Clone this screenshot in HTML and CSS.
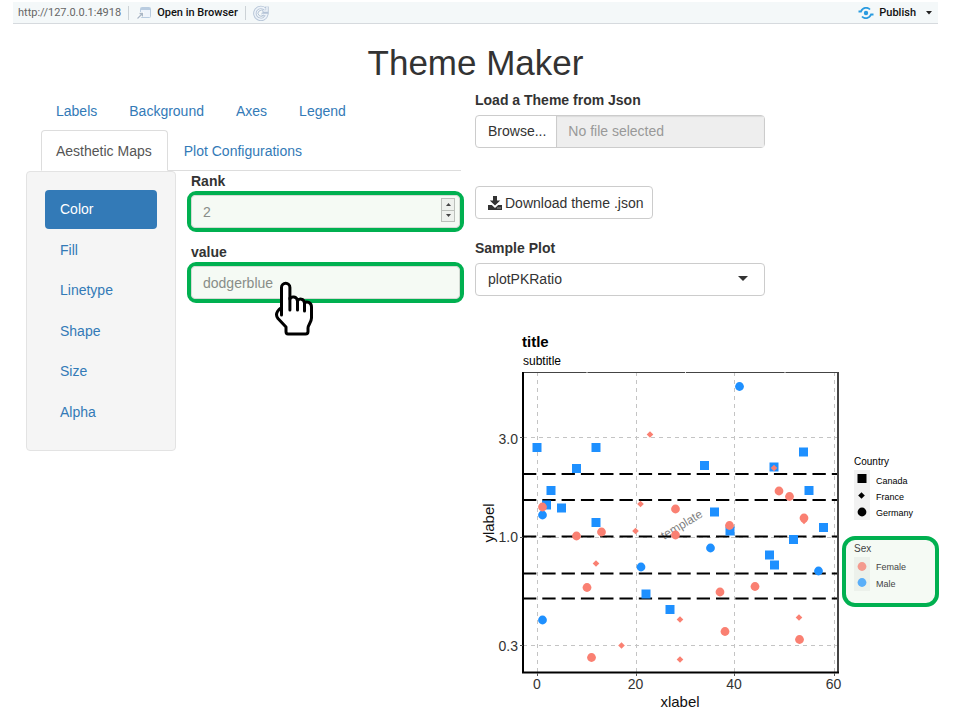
FILE: index.html
```html
<!DOCTYPE html>
<html lang="en">
<head>
<meta charset="utf-8">
<title>Theme Maker</title>
<link rel="stylesheet" href="styles.css">
</head>
<body>
<header class="toolbar">
  <span class="url">http://127.0.0.1:4918</span>
  <span class="divider"></span>
  <button class="tool" type="button">
    <svg width="16" height="14" viewBox="0 0 16 14" fill="none" aria-hidden="true"><rect x="4.500" y="1.500" width="10" height="10" rx="1" fill="#eef4fb" stroke="#b9cce0"/><path d="M5 3h9" stroke="#b9cce0" stroke-width="2"/><path d="M1.500 12.500 6 8M3.500 7.500H6.500V10.500" stroke="#fff" stroke-width="3"/><path d="M1.500 12.500 6 8M3.500 7.500H6.500V10.500" stroke="#a9b7c6" stroke-width="1.300"/></svg>
    Open in Browser
  </button>
  <span class="divider"></span>
  <button class="tool" type="button" aria-label="Refresh">
    <svg width="16" height="16" viewBox="0 0 16 16" fill="none" aria-hidden="true"><path d="M12.500 4.500A6 6 0 1 0 13.800 9.500H8.500M14 1.500V6H9.500" stroke="#b4c3d6" stroke-width="3.400"/><path d="M12.500 4.500A6 6 0 1 0 13.800 9.500H8.500M14 1.500V6H9.500" stroke="#edf3f9" stroke-width="1.600"/><path d="M10.500 6.500a3 3 0 1 0 0 3.500" stroke="#b4c3d6"/></svg>
  </button>
  <button class="tool publish" type="button">
    <svg width="16" height="12" viewBox="0 0 16 12" fill="none" aria-hidden="true"><circle cx="8" cy="6" r="2.200" fill="#2a9be0"/><path d="M.500 4.500H3C4.500.500 9.500-.300 12 2.500M15.500 7.500H13C11.500 11.500 6.500 12.300 4 9.500" stroke="#2a9be0" stroke-width="1.800"/></svg>
    Publish
    <svg class="more" width="6" height="4" viewBox="0 0 6 4" aria-hidden="true"><path d="M0 0h6L3 3.500z" fill="#222"/></svg>
  </button>
</header>

<h1>Theme Maker</h1>

<main class="columns">
  <section class="editor">
    <nav class="tabs">
      <a href="#labels">Labels</a>
      <a href="#background">Background</a>
      <a href="#axes">Axes</a>
      <a href="#legend">Legend</a>
      <a href="#maps" class="active">Aesthetic Maps</a>
      <a href="#config">Plot Configurations</a>
    </nav>
    <div class="pane">
      <nav class="well">
        <a href="#color" class="active">Color</a>
        <a href="#fill">Fill</a>
        <a href="#linetype">Linetype</a>
        <a href="#shape">Shape</a>
        <a href="#size">Size</a>
        <a href="#alpha">Alpha</a>
      </nav>
      <form class="fields">
        <label for="rank">Rank</label>
        <div class="marked">
          <input id="rank" type="number" value="2">
          <div class="spinner">
            <button type="button" aria-label="Increase"><svg width="5" height="3" viewBox="0 0 5 3"><path d="M0 3h5L2.500 0z" fill="#444"/></svg></button>
            <button type="button" aria-label="Decrease"><svg width="5" height="3" viewBox="0 0 5 3"><path d="M0 0h5L2.500 3z" fill="#444"/></svg></button>
          </div>
        </div>
        <label for="value">value</label>
        <div class="marked">
          <input id="value" type="text" value="dodgerblue">
          <svg class="hand" width="40" height="56" viewBox="0 0 40 56" aria-hidden="true"><path d="M7.500 33V6.500a4.200 4.200 0 0 1 8.400 0V18C17 15 23 15 23.500 20 25 17 30 17.500 30.500 22 32.500 20 37.500 21 37.500 26V37C37.500 41 34 44 34 47V50.500Q34 53 31.500 53H14Q12 53 12 50.500V46L4 37.500C2 35 2 33 3.500 30.500Q5 28 7.500 26.500" fill="#fff" stroke="#000" stroke-width="3" stroke-linejoin="round"/><path d="M7.500 26V34M15.900 17V29M23.500 19V29M30.500 22V30" fill="none" stroke="#000" stroke-width="3" stroke-linecap="round"/></svg>
        </div>
      </form>
    </div>
  </section>

  <section class="preview">
    <form class="controls">
      <label for="theme-name">Load a Theme from Json</label>
      <div class="file">
        <label class="browse">Browse...<input type="file" accept=".json"></label>
        <input id="theme-name" type="text" placeholder="No file selected" readonly>
      </div>
      <button class="download" type="button">
        <svg width="14" height="14" viewBox="0 0 14 14" aria-hidden="true"><path d="M5 0h4v4.500h3.200L7 9.500 1.800 4.500H5zM0 9h3.800L7 12l3.200-3H14v5H0z" fill="#333"/><path d="M9.500 12h1M11.500 12h1" stroke="#fff"/></svg>
        Download theme .json
      </button>
      <label for="sample">Sample Plot</label>
      <div class="select">
        <select id="sample"><option>plotPKRatio</option></select>
        <svg width="10" height="5" viewBox="0 0 10 5" aria-hidden="true"><path d="M0 0h10L5 5z" fill="#333"/></svg>
      </div>
    </form>
    <svg class="plot" viewBox="475 330 469 386" role="img" aria-label="Sample plot">
      <defs>
        <rect id="sq" x="-4.500" y="-4.500" width="9" height="9"/>
        <circle id="ci" r="4.400"/>
        <path id="di" d="M-3.300 0 0-3.300 3.300 0 0 3.300z"/>
      </defs>
      <text class="title" x="522" y="347">title</text>
      <text class="subtitle" x="523" y="365">subtitle</text>
      <path class="grid" d="M537.500 672V373M636.500 672V373M734.500 672V373M834.500 672V373M523 437.500H838M523 537.500H838M523 645.500H838"/>
      <text class="stamp" transform="translate(664 540) rotate(-31)">template</text>
      <path class="refs" d="M523 474H838M523 500H838M523 536.500H838M523 573.500H838M523 598.500H838"/>
      <g fill="#1e90ff">
        <use href="#sq" x="537" y="447.500"/><use href="#sq" x="596" y="447.500"/><use href="#sq" x="576.500" y="468.500"/><use href="#sq" x="551" y="490.500"/><use href="#sq" x="546.500" y="505"/><use href="#sq" x="561.500" y="508"/><use href="#sq" x="596" y="522.500"/><use href="#sq" x="704.500" y="465.500"/><use href="#sq" x="774" y="467"/><use href="#sq" x="803.500" y="452"/><use href="#sq" x="809" y="490.500"/><use href="#sq" x="714.500" y="512"/><use href="#sq" x="730" y="531"/><use href="#sq" x="793.500" y="539.500"/><use href="#sq" x="823.500" y="527.500"/><use href="#sq" x="769.500" y="555"/><use href="#sq" x="774.500" y="565"/><use href="#sq" x="646" y="594"/><use href="#sq" x="670" y="609.500"/>
        <use href="#ci" x="739.500" y="386.500"/><use href="#ci" x="542.500" y="515"/><use href="#ci" x="641" y="567"/><use href="#ci" x="710.500" y="548"/><use href="#ci" x="818.500" y="571"/><use href="#ci" x="542.500" y="620"/>
      </g>
      <g fill="#fa8072">
        <use href="#ci" x="542.500" y="507"/><use href="#ci" x="576.500" y="536"/><use href="#ci" x="601.500" y="532"/><use href="#ci" x="675.500" y="509"/><use href="#ci" x="675.500" y="535"/><use href="#ci" x="729.500" y="525.500"/><use href="#ci" x="779" y="491"/><use href="#ci" x="789.500" y="496.500"/><use href="#ci" x="804" y="518"/><use href="#ci" x="587" y="587.500"/><use href="#ci" x="720" y="592"/><use href="#ci" x="755" y="586.500"/><use href="#ci" x="591.500" y="657.500"/><use href="#ci" x="725" y="631.500"/><use href="#ci" x="799.500" y="639.500"/>
        <use href="#di" x="650" y="434.500"/><use href="#di" x="640.500" y="504"/><use href="#di" x="774" y="468"/><use href="#di" x="635.500" y="531"/><use href="#di" x="596" y="563.500"/><use href="#di" x="804" y="521"/><use href="#di" x="621.500" y="645.500"/><use href="#di" x="680" y="619.500"/><use href="#di" x="799" y="617.500"/><use href="#di" x="680" y="659.500"/>
      </g>
      <path d="M523 372.500H838" stroke="#444"/>
      <path d="M838 372V672" stroke="#444" stroke-width="2"/>
      <path d="M523 372V672.500H839" fill="none" stroke="#000" stroke-width="2"/>
      <path d="M586.500 372.500h1M685 372.500h1M784.500 372.500h1" stroke="#ddd"/>
      <path d="M520 437.500h3M520 537.500h3M520 645.500h3M537.500 673v3M636.500 673v3M734.500 673v3M834.500 673v3" stroke="#555"/>
      <g class="ticks" text-anchor="end"><text x="518" y="444">3.0</text><text x="518" y="542">1.0</text><text x="518" y="651">0.3</text></g>
      <g class="ticks" text-anchor="middle"><text x="537" y="689">0</text><text x="635.500" y="689">20</text><text x="734" y="689">40</text><text x="833.500" y="689">60</text></g>
      <text class="axis" x="680" y="707">xlabel</text>
      <text class="axis" transform="translate(494 523) rotate(-90)">ylabel</text>
      <text class="legend-title" x="854" y="465">Country</text>
      <path d="M854 470h16v50h-16z" fill="#f2f2f2"/>
      <use href="#sq" x="862" y="478.500"/><use href="#di" x="861.500" y="495.500"/><use href="#ci" x="862" y="512"/>
      <g class="keys"><text x="876" y="484">Canada</text><text x="876" y="500">France</text><text x="876" y="516">Germany</text></g>
      <rect x="844" y="538" width="93" height="67" rx="11" fill="#f5faf4" stroke="#00b050" stroke-width="4"/>
      <path d="M854 557h16v34h-16z" fill="#ecf1eb"/>
      <use href="#ci" x="862" y="566.500" fill="#f49a8e"/><use href="#ci" x="862" y="582.500" fill="#5aaef8"/>
      <g class="muted"><text class="legend-title" x="854" y="552">Sex</text><g class="keys"><text x="876" y="570">Female</text><text x="876" y="587">Male</text></g></g>
    </svg>
  </section>
</main>
</body>
</html>
```
FILE: styles.css
```css
* { box-sizing: border-box; }
body { margin: 0; padding-top: 2px; background: #fff; color: #333; font: 14px/20px "Liberation Sans", Arial, sans-serif; }
button, input, select { font: inherit; color: inherit; }
a { color: #337ab7; text-decoration: none; }
svg { display: block; flex: none; }

.toolbar { display: flex; align-items: center; gap: 7px; height: 22px; margin: 0 22px 0 13px; padding: 0 6px 0 5px; background: #f4f8f9; border-bottom: 1px solid #d6dade; font: 11px/20px Roboto, sans-serif; color: #666; }
.divider { width: 1px; height: 14px; background: #ccd2d6; }
.tool { display: flex; align-items: center; gap: 5px; padding: 0; border: 0; background: none; color: #111; font-weight: 500; white-space: nowrap; }
.publish { margin-left: auto; }
.more { margin-left: 5px; }

h1 { margin: 19px 22px 7px 13px; font-size: 35px; line-height: 40px; font-weight: 400; text-align: center; }

.columns { display: grid; grid-template-columns: 438fr 469fr; gap: 11px; padding: 0 16px 0 26px; }
.columns > * { min-width: 0; }

.tabs { display: flex; flex-wrap: wrap; margin: 0 3px 0 15px; border-bottom: 1px solid #ddd; }
.tabs a { margin: 0 1px -1px 0; padding: 10px 15px 9px 14px; border: 1px solid transparent; border-radius: 4px 4px 0 0; }
.tabs .active { color: #555; background: #fff; border-color: #ddd #ddd #fff; }

.pane { display: flex; align-items: flex-start; gap: 11px; }
.well { display: flex; flex-direction: column; justify-content: space-between; width: 150px; min-height: 280px; padding: 18px; background: #f5f5f5; border: 1px solid #e3e3e3; border-radius: 4px; }
.well a { padding: 9px 15px 10px; border-radius: 4px; }
.well .active { color: #fff; background: #337ab7; }

label { font-weight: 700; }
.fields { flex: 1; display: flex; flex-direction: column; min-width: 0; }
.fields label { padding-left: 4px; }
.marked { position: relative; display: flex; height: 41px; margin-bottom: 10px; border: 4px solid #00b050; border-radius: 9px; background: #f5faf4; }
.marked input { flex: 1; min-width: 0; padding: 0 11px; border: 1px solid #d3dad3; border-radius: 4px; background: none; color: #888d88; outline: 0; appearance: textfield; }
.marked input::-webkit-inner-spin-button { appearance: none; }
.spinner { position: absolute; top: 3px; right: 5px; display: grid; grid-template-rows: 1fr 1fr; width: 14px; height: 24px; border: 1px solid #bcc0bb; background: #bcc0bb; gap: 1px; }
.spinner button { display: grid; place-items: center; padding: 0; border: 0; background: #eef1ed; }
.hand { position: absolute; left: 83px; top: 15px; }

.controls { display: flex; flex-direction: column; align-items: flex-start; max-width: 290px; }
.file { display: flex; width: 100%; height: 33px; margin: 5px 0 38px; border: 1px solid #ccc; border-radius: 4px; }
.browse { position: relative; padding: 5px 10px 6px 12px; border-right: 1px solid #ccc; font-weight: 400; line-height: 20px; }
.browse input { position: absolute; inset: 0; width: 100%; opacity: 0; }
.file > input { flex: 1; min-width: 0; padding: 0 11px 1px; border: 0; background: #eee; box-shadow: inset 0 1px 1px rgba(0, 0, 0, .08); }
.file > input::placeholder { color: #999; opacity: 1; }
.download { display: flex; align-items: center; gap: 3px; height: 33px; margin-bottom: 19px; padding: 0 8px 0 12px; border: 1px solid #ccc; border-radius: 4px; background: #fff; white-space: nowrap; }
.select { position: relative; width: 100%; margin-top: 5px; }
.select select { width: 100%; height: 33px; padding: 0 12px 2px; border: 1px solid #ccc; border-radius: 4px; background: #fff; appearance: none; }
.select svg { position: absolute; right: 17px; top: 13px; pointer-events: none; }

.plot { width: 100%; height: auto; margin-top: 34px; font-family: "Liberation Sans", Arial, sans-serif; fill: #000; }
.title { font-size: 15px; font-weight: 700; }
.subtitle { font-size: 12px; }
.grid { stroke: #c4c4c4; stroke-dasharray: 4 4; }
.refs { stroke: #000; stroke-width: 2; stroke-dasharray: 13.3 6; }
.stamp { font-size: 12px; fill: #7f7f7f; }
.ticks { font-size: 14px; fill: #333; }
.axis { font-size: 15px; text-anchor: middle; fill: #111; }
.legend-title { font-size: 10px; }
.keys { font-size: 9px; }
.muted { fill: #444; }
```
